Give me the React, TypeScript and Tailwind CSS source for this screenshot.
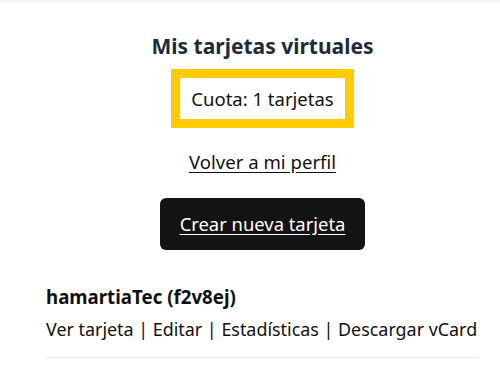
export default function App() {
  return (
    <div className="min-h-[381px] bg-white border-t-[3px] border-[#f3f4f6]" style={{ fontFamily: '"Noto Sans", "Open Sans", sans-serif' }}>
      <main className="pl-[46px] pr-[21px] pt-[28px] flex flex-col items-center text-[#111]">
        <h1 className="text-[21px] font-bold text-[#1e2b3c] leading-[30px]">Mis tarjetas virtuales</h1>

        <div className="mt-[8px] border-[9px] border-[#ffcc00] px-[11px] py-[6px] text-[18.5px] leading-[29px] whitespace-nowrap">
          Cuota: 1 tarjetas
        </div>

        <a href="#" className="mt-[22px] text-[18.6px] leading-[24px] underline underline-offset-[3px]">
          Volver a mi perfil
        </a>

        <a href="#" className="mt-[24px] bg-[#131313] text-white rounded-[6px] px-[20px] py-[13px] text-[18.4px] leading-[26px] underline underline-offset-[3px]">
          Crear nueva tarjeta
        </a>

        <div className="self-stretch mt-[34px] border-b border-[#e5e7eb] pb-[15px]">
          <p className="text-[18.7px] font-bold leading-[26px]">hamartiaTec (f2v8ej)</p>
          <p className="mt-[6px] text-[17.9px] leading-[26px] whitespace-nowrap">
            <a href="#">Ver tarjeta</a> | <a href="#">Editar</a> | <a href="#">Estadísticas</a> | <a href="#">Descargar vCard</a>
          </p>
        </div>
      </main>
    </div>
  )
}
